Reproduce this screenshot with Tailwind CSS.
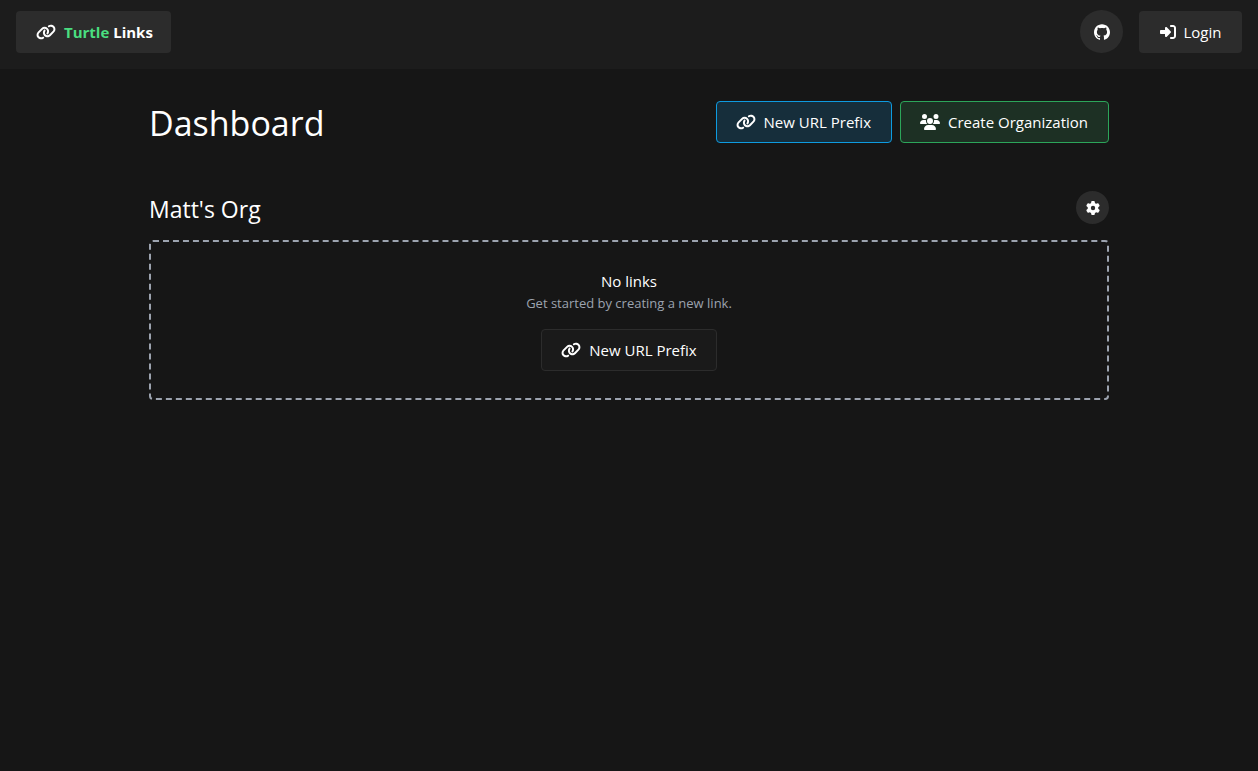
<!DOCTYPE html>
<html lang="en">
<head>
<meta charset="utf-8">
<meta name="viewport" content="width=device-width, initial-scale=1">
<title>Turtle Links</title>
<script src="https://cdn.jsdelivr.net/npm/@tailwindcss/browser@4"></script>
</head>
<body class="min-h-screen bg-[#161616] font-['Open_Sans','Noto_Sans',sans-serif] text-[15px] leading-6 text-white">
<svg class="hidden" aria-hidden="true">
  <symbol id="link" viewBox="0 0 640 512"><path d="M579.8 267.7c56.5-56.5 56.5-148 0-204.5c-50-50-128.8-56.5-186.3-15.4l-1.6 1.1c-14.4 10.3-17.7 30.3-7.4 44.6s30.3 17.7 44.6 7.4l1.6-1.1c32.1-22.9 76-19.3 103.8 8.6c31.5 31.5 31.5 82.5 0 114L422.3 334.8c-31.5 31.5-82.5 31.5-114 0c-27.9-27.9-31.5-71.8-8.6-103.8l1.1-1.6c10.3-14.4 6.9-34.4-7.4-44.6s-34.4-6.9-44.6 7.4l-1.1 1.6C206.5 251.2 213 330 263 380c56.5 56.5 148 56.5 204.5 0L579.8 267.7zM60.2 244.3c-56.5 56.5-56.5 148 0 204.5c50 50 128.8 56.5 186.3 15.4l1.6-1.1c14.4-10.3 17.7-30.3 7.4-44.6s-30.3-17.7-44.6-7.4l-1.6 1.1c-32.1 22.9-76 19.3-103.8-8.6C74 372 74 321 105.5 289.5L217.7 177.2c31.5-31.5 82.5-31.5 114 0c27.9 27.9 31.5 71.8 8.6 103.9l-1.1 1.6c-10.3 14.4-6.9 34.4 7.4 44.6s34.4 6.9 44.6-7.4l1.1-1.6C433.5 260.8 427 182 377 132c-56.5-56.5-148-56.5-204.5 0L60.2 244.3z"/></symbol>
  <symbol id="github" viewBox="0 0 24 24"><path d="M12 .297c-6.63 0-12 5.373-12 12 0 5.303 3.438 9.8 8.205 11.385.6.113.82-.258.82-.577 0-.285-.01-1.04-.015-2.04-3.338.724-4.042-1.61-4.042-1.61C4.422 18.07 3.633 17.7 3.633 17.7c-1.087-.744.084-.729.084-.729 1.205.084 1.838 1.236 1.838 1.236 1.07 1.835 2.809 1.305 3.495.998.108-.776.417-1.305.76-1.605-2.665-.3-5.466-1.332-5.466-5.93 0-1.31.465-2.38 1.235-3.22-.135-.303-.54-1.523.105-3.176 0 0 1.005-.322 3.3 1.23.96-.267 1.98-.399 3-.405 1.02.006 2.04.138 3 .405 2.28-1.552 3.285-1.23 3.285-1.23.645 1.653.24 2.873.12 3.176.765.84 1.23 1.91 1.23 3.22 0 4.61-2.805 5.625-5.475 5.92.42.36.81 1.096.81 2.22 0 1.606-.015 2.896-.015 3.286 0 .315.21.69.825.57C20.565 22.092 24 17.592 24 12.297c0-6.627-5.373-12-12-12"/></symbol>
  <symbol id="login" viewBox="0 0 512 512"><path d="M217.9 105.9L340.7 228.7c7.2 7.2 11.3 17.1 11.3 27.3s-4.1 20.1-11.3 27.3L217.9 406.1c-6.4 6.4-15 9.9-24 9.9c-18.7 0-33.9-15.2-33.9-33.9l0-62.1L32 320c-17.7 0-32-14.3-32-32l0-64c0-17.7 14.3-32 32-32l128 0 0-62.1c0-18.7 15.2-33.9 33.9-33.9c9 0 17.6 3.6 24 9.9zM352 416l64 0c17.7 0 32-14.3 32-32l0-256c0-17.7-14.3-32-32-32l-64 0c-17.7 0-32-14.3-32-32s14.3-32 32-32l64 0c53 0 96 43 96 96l0 256c0 53-43 96-96 96l-64 0c-17.7 0-32-14.3-32-32s14.3-32 32-32z"/></symbol>
  <symbol id="users" viewBox="0 0 640 512"><path d="M144 0a80 80 0 1 1 0 160A80 80 0 1 1 144 0zM512 0a80 80 0 1 1 0 160A80 80 0 1 1 512 0zM0 298.7C0 239.8 47.8 192 106.7 192h42.7c15.9 0 31 3.5 44.6 9.7c-1.3 7.2-1.9 14.7-1.9 22.3c0 38.2 16.8 72.5 43.3 96c-.2 0-.4 0-.7 0H21.3C9.6 320 0 310.4 0 298.7zM405.3 320c-.2 0-.4 0-.7 0c26.6-23.5 43.3-57.8 43.3-96c0-7.6-.7-15-1.9-22.3c13.6-6.3 28.7-9.7 44.6-9.7h42.7C592.2 192 640 239.8 640 298.7c0 11.8-9.6 21.3-21.3 21.3H405.3zM224 224a96 96 0 1 1 192 0 96 96 0 1 1 -192 0zM128 485.3C128 411.7 187.7 352 261.3 352H378.7C452.3 352 512 411.7 512 485.3c0 14.7-11.9 26.7-26.7 26.7H154.7c-14.7 0-26.7-11.9-26.7-26.7z"/></symbol>
  <symbol id="gear" viewBox="0 0 512 512"><path d="M495.9 166.6c3.2 8.7 .5 18.4-6.4 24.6l-43.3 39.4c1.1 8.3 1.7 16.8 1.7 25.4s-.6 17.1-1.7 25.4l43.3 39.4c6.9 6.2 9.6 15.9 6.4 24.6c-4.4 11.9-9.7 23.3-15.8 34.3l-4.7 8.1c-6.6 11-14 21.4-22.1 31.2c-5.9 7.2-15.7 9.6-24.5 6.8l-55.7-17.7c-13.4 10.3-28.2 18.9-44 25.4l-12.5 57.1c-2 9.1-9 16.3-18.2 17.8c-13.8 2.3-28 3.5-42.5 3.5s-28.7-1.2-42.5-3.5c-9.2-1.5-16.2-8.7-18.2-17.8l-12.5-57.1c-15.8-6.5-30.6-15.1-44-25.4L83.1 425.9c-8.8 2.8-18.6 .3-24.5-6.8c-8.1-9.8-15.5-20.2-22.1-31.2l-4.7-8.1c-6.1-11-11.4-22.4-15.8-34.3c-3.2-8.7-.5-18.4 6.4-24.6l43.3-39.4C64.6 273.1 64 264.6 64 256s.6-17.1 1.7-25.4L22.4 191.2c-6.9-6.2-9.6-15.9-6.4-24.6c4.4-11.9 9.7-23.3 15.8-34.3l4.7-8.1c6.6-11 14-21.4 22.1-31.2c5.9-7.2 15.7-9.6 24.5-6.8l55.7 17.7c13.4-10.3 28.2-18.9 44-25.4l12.5-57.1c2-9.1 9-16.3 18.2-17.8C227.3 1.2 241.5 0 256 0s28.7 1.2 42.5 3.5c9.2 1.5 16.2 8.7 18.2 17.8l12.5 57.1c15.8 6.5 30.6 15.1 44 25.4l55.7-17.7c8.8-2.8 18.6-.3 24.5 6.8c8.1 9.8 15.5 20.2 22.1 31.2l4.7 8.1c6.1 11 11.4 22.4 15.8 34.3zM256 336a80 80 0 1 0 0-160 80 80 0 1 0 0 160z"/></symbol>
</svg>

<header class="flex items-start justify-between bg-[#1c1c1c] px-4 pt-[10px] pb-4">
  <a href="#" class="mt-px flex h-[42px] items-center gap-2 rounded bg-[#2c2c2c] pr-[18px] pl-5 font-bold">
    <svg class="h-4 w-5 fill-current" aria-hidden="true"><use href="#link"/></svg>
    <span><span class="text-[#4ade80]">Turtle</span> Links</span>
  </a>
  <nav class="flex items-start gap-4">
    <a href="#" aria-label="GitHub" class="flex size-[43px] items-center justify-center rounded-full bg-[#2c2c2c]">
      <svg class="size-4 fill-current" aria-hidden="true"><use href="#github"/></svg>
    </a>
    <a href="#" class="mt-px flex h-[42px] min-w-[103px] items-center justify-center gap-2 rounded bg-[#2c2c2c] px-5">
      <svg class="size-4 fill-current" aria-hidden="true"><use href="#login"/></svg>
      Login
    </a>
  </nav>
</header>

<main class="mx-auto max-w-[960px] pt-8">
  <div class="flex items-start justify-between">
    <h1 class="text-[34px] leading-[44px]">Dashboard</h1>
    <div class="flex gap-2">
      <button type="button" class="flex h-[42px] items-center gap-2 rounded border border-[#0e9be0] bg-[#162e3b] pr-5 pl-[19px]">
        <svg class="h-4 w-5 fill-current" aria-hidden="true"><use href="#link"/></svg>
        New URL Prefix
      </button>
      <button type="button" class="flex h-[42px] items-center gap-2 rounded border border-[#2ca55a] bg-[#1d3024] pr-5 pl-[19px]">
        <svg class="h-4 w-5 fill-current" aria-hidden="true"><use href="#users"/></svg>
        Create Organization
      </button>
    </div>
  </div>

  <section class="mt-[46px]">
    <div class="flex items-start justify-between">
      <h2 class="text-[23px] leading-9">Matt's Org</h2>
      <button type="button" aria-label="Organization settings" class="flex size-[33px] items-center justify-center rounded-full bg-[#2c2c2c]">
        <svg class="size-[14px] fill-current" aria-hidden="true"><use href="#gear"/></svg>
      </button>
    </div>
    <div class="mt-[13px] flex flex-col items-center rounded border-2 border-dashed border-[#9ca3af] py-[27px]">
      <h3 class="leading-6">No links</h3>
      <p class="text-[13px] leading-5 text-[#9ca3af]">Get started by creating a new link.</p>
      <button type="button" class="mt-4 flex h-[42px] items-center gap-2 rounded border border-[#2c2c2c] bg-[#1a1a1a] px-[19px]">
        <svg class="h-4 w-5 fill-current" aria-hidden="true"><use href="#link"/></svg>
        New URL Prefix
      </button>
    </div>
  </section>
</main>
</body>
</html>
